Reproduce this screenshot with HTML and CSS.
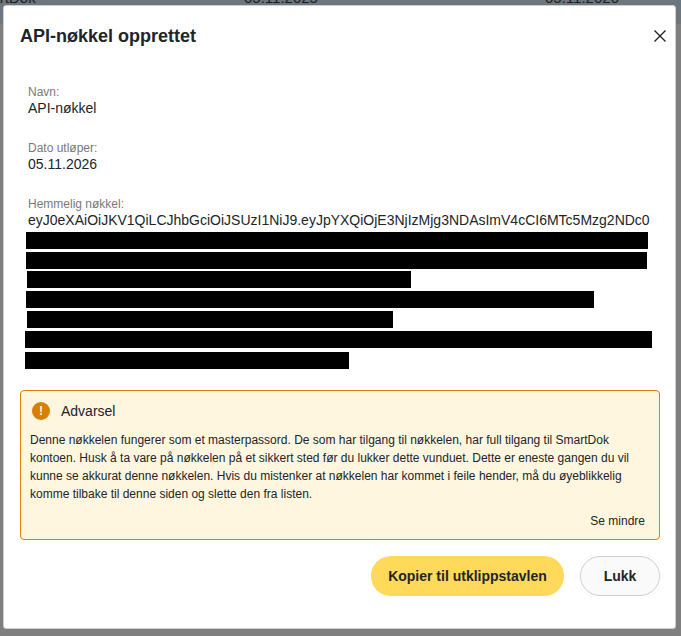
FILE: index.html
```html
<!DOCTYPE html>
<html lang="no">
<head>
  <meta charset="UTF-8" />
  <meta name="viewport" content="width=device-width, initial-scale=1.0"/>
  <title>API-nøkkel opprettet</title>
  <link rel="stylesheet" href="styles.css">
</head>
<body>
  <!-- tabellen bak modalen -->
  <div class="behind-row">
    <span class="behind-name">SmartDok</span>
    <span class="behind-from">05.11.2025</span>
    <span class="behind-to">05.11.2026</span>
  </div>

  <div class="modal">
    <div class="modal-header">
      <h2>API-nøkkel opprettet</h2>
      <button class="close-btn" aria-label="Lukk">
        <svg viewBox="0 0 12 12" width="12" height="12"><path d="M.5.5l11 11M11.5.5l-11 11" stroke="#212529" stroke-width="1.4" fill="none"/></svg>
      </button>
    </div>

    <div class="field">
      <div class="field-label">Navn:</div>
      <div class="field-value">API-nøkkel</div>
    </div>
    <div class="field">
      <div class="field-label">Dato utløper:</div>
      <div class="field-value">05.11.2026</div>
    </div>
    <div class="field field-key">
      <div class="field-label">Hemmelig nøkkel:</div>
      <div class="field-value">eyJ0eXAiOiJKV1QiLCJhbGciOiJSUzI1NiJ9.eyJpYXQiOjE3NjIzMjg3NDAsImV4cCI6MTc5Mzg2NDc0</div>
      <div class="redacted">
        <div class="bar bar-1"></div>
        <div class="bar bar-2"></div>
        <div class="bar bar-3"></div>
        <div class="bar bar-4"></div>
        <div class="bar bar-5"></div>
        <div class="bar bar-6"></div>
        <div class="bar bar-7"></div>
      </div>
    </div>

    <div class="warning">
      <div class="warning-head">
        <span class="warning-icon">!</span>
        <span class="warning-title">Advarsel</span>
      </div>
      <p>Denne nøkkelen fungerer som et masterpassord. De som har tilgang til nøkkelen, har full tilgang til SmartDok kontoen. Husk å ta vare på nøkkelen på et sikkert sted før du lukker dette vunduet. Dette er eneste gangen du vil kunne se akkurat denne nøkkelen. Hvis du mistenker at nøkkelen har kommet i feile hender, må du øyeblikkelig komme tilbake til denne siden og slette den fra listen.</p>
      <div class="warning-more">Se mindre</div>
    </div>

    <div class="modal-actions">
      <button class="btn btn-copy">Kopier til utklippstavlen</button>
      <button class="btn btn-close">Lukk</button>
    </div>
  </div>
</body>
</html>
```

FILE: styles.css
```css
* {
  box-sizing: border-box;
}

html,
body {
  height: 636px;
}

body {
  margin: 0;
  padding: 5px 5px 7px 3px;
  overflow: hidden;
  position: relative;
  font-family: "Liberation Sans", Arial, sans-serif;
  color: #212529;
  background-color: #7f7f7f;
}

/* tabellen bak modalen */
.behind-row {
  position: absolute;
  top: 0;
  left: 0;
  width: 100%;
  height: 24px;
  font-size: 15px;
  line-height: 16px;
  color: #1c1f22;
  background-color: #6d757d;
}

.behind-name,
.behind-from,
.behind-to {
  position: absolute;
  top: -10px;
}

.behind-name {
  left: -31px;
}

.behind-from {
  left: 244px;
}

.behind-to {
  left: 545px;
}

.modal {
  position: relative;
  height: 624px;
  padding: 0 15px 0 16px;
  background-color: #fff;
  border: 1px solid #cfcfcf;
  border-radius: 3px;
}

.modal-header {
  display: flex;
  justify-content: space-between;
  align-items: center;
  height: 60px;
  margin-bottom: 19px;
}

h2 {
  margin: 0;
  font-size: 18px;
  font-weight: 700;
}

.close-btn {
  display: flex;
  padding: 0;
  margin-right: -6px;
  background: none;
  border: none;
}

.field {
  padding: 0 8px;
  margin-bottom: 24px;
}

.field-label {
  font-size: 12px;
  line-height: 14px;
  color: #7a7a7a;
}

.field-value {
  font-size: 14px;
  line-height: 18px;
}

.field-key {
  margin-bottom: 21px;
}

.redacted {
  display: flex;
  flex-direction: column;
  gap: 3px;
  margin-top: 3px;
  margin-left: -2px;
}

.bar {
  height: 17px;
  background-color: #000;
}

.bar-1 { width: 622px; }
.bar-2 { width: 621px; }
.bar-3 { width: 384px; margin-top: -1px; margin-left: 1px; }
.bar-4 { width: 568px; }
.bar-5 { width: 366px; margin-left: 1px; }
.bar-6 { width: 627px; margin-left: -1px; }
.bar-7 { width: 324px; margin-top: 1px; margin-left: -1px; }

.warning {
  height: 150px;
  padding: 10px 14px 0 11px;
  background-color: #fff6df;
  border: 1px solid #d98200;
  border-radius: 4px;
}

.warning-head {
  display: flex;
  align-items: center;
  gap: 11px;
  height: 20px;
  margin-bottom: 10px;
}

.warning-icon {
  display: flex;
  justify-content: center;
  align-items: center;
  width: 18px;
  height: 18px;
  font-size: 12px;
  font-weight: 700;
  color: #fff6df;
  background-color: #d97f00;
  border-radius: 50%;
}

.warning-title {
  font-size: 14px;
}

.warning p {
  margin: 0 0 0 -2px;
  font-size: 12px;
  line-height: 18px;
}

.warning-more {
  margin-top: 11px;
  font-size: 12px;
  line-height: 14px;
  text-align: right;
}

.modal-actions {
  display: flex;
  justify-content: flex-end;
  gap: 16px;
  margin-top: 16px;
}

.btn {
  height: 40px;
  font-family: inherit;
  font-size: 14px;
  font-weight: 700;
  color: #212529;
  border-radius: 20px;
}

.btn-copy {
  width: 193px;
  background-color: #ffd95a;
  border: none;
}

.btn-close {
  width: 80px;
  background-color: #fafafa;
  border: 1px solid #cfcfcf;
}
```
